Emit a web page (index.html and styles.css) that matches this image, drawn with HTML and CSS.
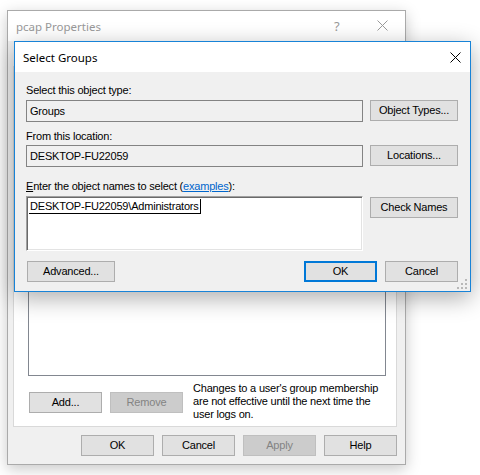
FILE: index.html
```html
<!DOCTYPE html>
<html>
<head>
<meta charset="utf-8">
<link rel="stylesheet" href="styles.css">
</head>
<body>
<div class="desktop">
  <div class="win back">
    <div class="titlebar">
      <span class="title inactive">pcap Properties</span>
      <span class="tb-help">?</span>
      <svg class="tb-close" width="11" height="11" viewBox="0 0 11 11"><path d="M0.5 0.5L10.5 10.5M10.5 0.5L0.5 10.5" stroke="#9a9a9a" stroke-width="1"/></svg>
    </div>
    <div class="back-body">
      <div class="panel">
        <div class="listbox"></div>
        <div class="add-row">
          <button class="btn sm first">Add...</button>
          <button class="btn sm disabled">Remove</button>
          <div class="note">Changes to a user's group membership<br>are not effective until the next time the<br>user logs on.</div>
        </div>
      </div>
      <div class="back-buttons">
        <button class="btn sm">OK</button>
        <button class="btn sm">Cancel</button>
        <button class="btn sm disabled">Apply</button>
        <button class="btn sm">Help</button>
      </div>
    </div>
  </div>

  <div class="win front">
    <div class="titlebar">
      <span class="title">Select Groups</span>
      <svg class="fr-close" width="11" height="11" viewBox="0 0 11 11"><path d="M0.5 0.5L10.5 10.5M10.5 0.5L0.5 10.5" stroke="#000" stroke-width="1"/></svg>
    </div>
    <div class="sg-body">
      <div class="lbl l1">Select this object type:</div>
      <div class="row r1">
        <div class="field">Groups</div>
        <button class="btn">Object Types...</button>
      </div>
      <div class="lbl l2">From this location:</div>
      <div class="row r2">
        <div class="field">DESKTOP-FU22059</div>
        <button class="btn">Locations...</button>
      </div>
      <div class="lbl l3"><u>E</u>nter the object names to select (<span class="link">examples</span>):</div>
      <div class="row r3">
        <div class="edit"><span class="name">DESKTOP-FU22059\Administrators</span></div>
        <button class="btn cn">Check Names</button>
      </div>
      <div class="row r4">
        <button class="btn adv">Advanced...</button>
        <div class="ok-cancel">
          <button class="btn sm default">OK</button>
          <button class="btn sm">Cancel</button>
        </div>
      </div>
    </div>
    <svg class="grip" width="10" height="10" viewBox="0 0 10 10">
      <rect x="8" y="0" width="2" height="2" fill="#b8b8b8"/>
      <rect x="4" y="4" width="2" height="2" fill="#b8b8b8"/>
      <rect x="8" y="4" width="2" height="2" fill="#b8b8b8"/>
      <rect x="0" y="8" width="2" height="2" fill="#b8b8b8"/>
      <rect x="4" y="8" width="2" height="2" fill="#b8b8b8"/>
      <rect x="8" y="8" width="2" height="2" fill="#b8b8b8"/>
    </svg>
  </div>
</div>
</body>
</html>
```
FILE: styles.css
```css
* { box-sizing: border-box; }
html, body { margin: 0; padding: 0; background: #fff; }
body {
  font-family: "Liberation Sans", Arial, sans-serif;
  font-size: 11px;
  letter-spacing: -0.2px;
  color: #000;
}
.desktop {
  position: relative;
  width: 480px;
  height: 475px;
  overflow: hidden;
  background: #fff;
}
.win {
  position: absolute;
  display: flex;
  flex-direction: column;
  background: #f0f0f0;
}
.back {
  left: 7px;
  top: 10px;
  width: 399px;
  height: 455px;
  border: 1px solid #aaaaaa;
  box-shadow: 0 4px 14px rgba(0,0,0,0.22);
}
.front {
  left: 14px;
  top: 41px;
  width: 457px;
  height: 251px;
  border: 1px solid #1883d7;
  box-shadow: 0 6px 22px rgba(0,0,0,0.33);
}
.titlebar {
  position: relative;
  height: 30px;
  flex: none;
  background: #fff;
  display: flex;
  align-items: center;
  padding-left: 8px;
}
.title {
  font-family: "Noto Sans", "Open Sans", sans-serif;
  font-size: 11.5px;
  letter-spacing: 0;
  color: #000;
}
.title.inactive { color: #999; }
.tb-help {
  position: absolute;
  left: 326px;
  top: 6px;
  font-family: "Noto Sans", sans-serif;
  font-size: 13px;
  color: #999;
}
.tb-close { position: absolute; left: 369px; top: 9px; }
.fr-close { position: absolute; left: 435px; top: 10px; }

/* back window body */
.back-body {
  flex: 1;
  display: flex;
  flex-direction: column;
  padding: 25px 8px 8px 5px;
}
.panel {
  height: 361px;
  background: #fff;
  border: 1px solid #d9d9d9;
  display: flex;
  flex-direction: column;
  padding: 0 10px 5px 14px;
}
.listbox {
  flex: 1;
  border: 1px solid #828790;
  background: #fff;
}
.add-row {
  display: flex;
  align-items: flex-start;
  margin-top: 6px;
}
.add-row .btn { margin-top: 10px; }
.add-row .first { margin-left: 1px; margin-right: 8px; }
.note {
  margin-left: 10px;
  line-height: 13px;
  white-space: nowrap;
}
.back-buttons {
  display: flex;
  justify-content: flex-end;
  gap: 8px;
  margin-top: 8px;
}

/* buttons */
.btn {
  font-family: "Liberation Sans", Arial, sans-serif;
  font-size: 11px;
  letter-spacing: -0.2px;
  color: #000;
  width: 88px;
  height: 21px;
  padding: 0;
  background: #e1e1e1;
  border: 1px solid #adadad;
  border-radius: 0;
  flex: none;
  line-height: 19px;
  text-align: center;
}
.btn.sm { width: 73px; }
.btn.disabled {
  background: #cccccc;
  border-color: #bfbfbf;
  color: #838383;
}
.btn.default {
  border: 2px solid #0078d7;
  line-height: 17px;
}

/* select groups body */
.sg-body {
  flex: 1;
  display: flex;
  flex-direction: column;
  padding: 12px 12px 0 11px;
}
.lbl { line-height: 13px; height: 13px; white-space: nowrap; }
.l2 { margin-top: 8px; }
.l3 { margin-top: 13px; }
.link { color: #0066cc; text-decoration: underline; }
.row {
  display: flex;
  justify-content: space-between;
  align-items: flex-start;
}
.r1 { margin-top: 3px; }
.r2 { margin-top: 2px; }
.r3 { margin-top: 3px; }
.r4 { margin-top: 10px; }
.field {
  width: 337px;
  height: 22px;
  border: 1px solid #838383;
  background: #f0f0f0;
  padding-left: 3px;
  line-height: 20px;
  white-space: nowrap;
}
.edit {
  width: 337px;
  height: 55px;
  background: #fff;
  border-top: 1px solid #a0a0a0;
  border-left: 1px solid #a0a0a0;
  border-right: 1px solid #fff;
  border-bottom: 1px solid #fff;
  box-shadow: inset 1px 1px 0 #696969, inset -1px -1px 0 #e3e3e3;
  padding: 2px 0 0 2px;
  line-height: 14px;
}
.name {
  display: inline-block;
  border-bottom: 1px solid #000;
  border-right: 1px solid #000;
  padding-left: 1px;
  padding-right: 1px;
  line-height: 14px;
  white-space: nowrap;
}
.cn { margin-top: 1px; }
.adv { margin-left: 1px; }
.ok-cancel { display: flex; gap: 8px; }
.grip { position: absolute; right: 3px; bottom: 2px; }
```
